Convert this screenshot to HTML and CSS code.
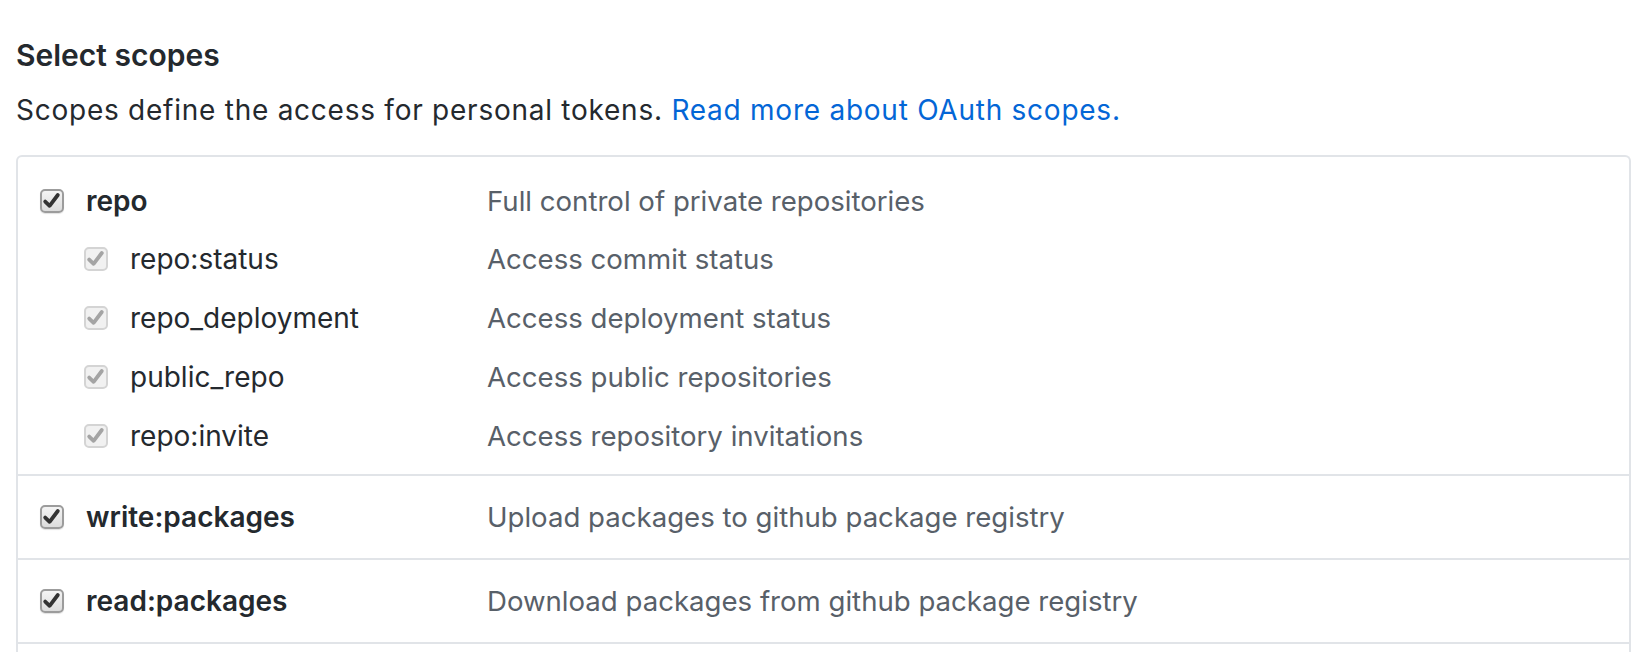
FILE: index.html
```html
<!DOCTYPE html>
<html lang="en">
<head>
<meta charset="utf-8">
<title>Select scopes</title>
<link rel="stylesheet" href="styles.css">
</head>
<body>
<div class="page">
  <h2 class="title">Select scopes</h2>
  <p class="lead">Scopes define the access for personal tokens. <a class="link" href="#">Read more about OAuth scopes.</a></p>
  <div class="scopes">
    <div class="group group-multi">
      <div class="row row-top">
        <div class="left">
          <span class="cb"><svg viewBox="0 0 24 24" width="24" height="24"><path d="M5.2 12.6 L9.6 16.8 L17.8 6" fill="none" stroke="#333" stroke-width="3.8" stroke-linecap="round" stroke-linejoin="round"/></svg></span>
          <span class="name strong">repo</span>
        </div>
        <span class="desc">Full control of private repositories</span>
      </div>
      <div class="row row-sub">
        <div class="left">
          <span class="cb cb-off"><svg viewBox="0 0 24 24" width="24" height="24"><path d="M5.2 12.6 L9.6 16.8 L17.8 6" fill="none" stroke="#a4a4a4" stroke-width="3.8" stroke-linecap="round" stroke-linejoin="round"/></svg></span>
          <span class="name">repo:status</span>
        </div>
        <span class="desc">Access commit status</span>
      </div>
      <div class="row row-sub">
        <div class="left">
          <span class="cb cb-off"><svg viewBox="0 0 24 24" width="24" height="24"><path d="M5.2 12.6 L9.6 16.8 L17.8 6" fill="none" stroke="#a4a4a4" stroke-width="3.8" stroke-linecap="round" stroke-linejoin="round"/></svg></span>
          <span class="name">repo_deployment</span>
        </div>
        <span class="desc">Access deployment status</span>
      </div>
      <div class="row row-sub">
        <div class="left">
          <span class="cb cb-off"><svg viewBox="0 0 24 24" width="24" height="24"><path d="M5.2 12.6 L9.6 16.8 L17.8 6" fill="none" stroke="#a4a4a4" stroke-width="3.8" stroke-linecap="round" stroke-linejoin="round"/></svg></span>
          <span class="name">public_repo</span>
        </div>
        <span class="desc">Access public repositories</span>
      </div>
      <div class="row row-sub">
        <div class="left">
          <span class="cb cb-off"><svg viewBox="0 0 24 24" width="24" height="24"><path d="M5.2 12.6 L9.6 16.8 L17.8 6" fill="none" stroke="#a4a4a4" stroke-width="3.8" stroke-linecap="round" stroke-linejoin="round"/></svg></span>
          <span class="name">repo:invite</span>
        </div>
        <span class="desc">Access repository invitations</span>
      </div>
    </div>
    <div class="group">
      <div class="row row-single">
        <div class="left">
          <span class="cb"><svg viewBox="0 0 24 24" width="24" height="24"><path d="M5.2 12.6 L9.6 16.8 L17.8 6" fill="none" stroke="#333" stroke-width="3.8" stroke-linecap="round" stroke-linejoin="round"/></svg></span>
          <span class="name strong">write:packages</span>
        </div>
        <span class="desc">Upload packages to github package registry</span>
      </div>
    </div>
    <div class="group">
      <div class="row row-single">
        <div class="left">
          <span class="cb"><svg viewBox="0 0 24 24" width="24" height="24"><path d="M5.2 12.6 L9.6 16.8 L17.8 6" fill="none" stroke="#333" stroke-width="3.8" stroke-linecap="round" stroke-linejoin="round"/></svg></span>
          <span class="name strong">read:packages</span>
        </div>
        <span class="desc">Download packages from github package registry</span>
      </div>
    </div>
    <div class="group group-last"></div>
  </div>
</div>
</body>
</html>
```
FILE: styles.css
```css
* { box-sizing: border-box; }
html, body { margin: 0; padding: 0; background: #fff; }
body {
  font-family: Inter, "Liberation Sans", Arial, sans-serif;
  color: #24292e;
  font-size: 28px;
}
.page { padding: 35px 15px 0 16px; }
.title {
  margin: 0;
  font-size: 30px;
  font-weight: 600;
  line-height: 40px;
  color: #24292e;
}
.lead {
  margin: 15px 0 0;
  line-height: 40px;
  font-size: 28px;
  letter-spacing: 0.75px;
}
.link { color: #0366d6; text-decoration: none; }
.scopes {
  margin-top: 25px;
  border: 2px solid #e1e4e8;
  border-bottom: 0;
  border-radius: 6px 6px 0 0;
}
.group { border-bottom: 2px solid #e1e4e8; padding: 0 22px; }
.group-multi { padding: 15px 22px 9px; }
.group-last { height: 20px; border-bottom: 0; }
.row { display: flex; align-items: center; }
.row-top { height: 57px; }
.row-sub { height: 59px; }
.row-single { height: 82px; }
.left { flex: 0 0 447px; display: flex; align-items: center; }
.row-sub .left { padding-left: 44px; }
.cb {
  flex: 0 0 24px;
  width: 24px;
  height: 24px;
  margin-right: 22px;
  border: 2px solid #9c9c9c;
  border-radius: 5px;
  background: linear-gradient(#f4f4f4, #dcdcdc);
  box-shadow: 0 1px 1px rgba(0,0,0,0.12);
  display: flex;
  align-items: center;
  justify-content: center;
  overflow: hidden;
}
.cb svg { display: block; flex: 0 0 auto; }
.cb-off {
  border-color: #d4d4d4;
  background: #f1f1f1;
  box-shadow: none;
}
.name { color: #24292e; }
.strong { font-weight: 600; }
.desc { color: #586069; font-size: 27.6px; }
```
